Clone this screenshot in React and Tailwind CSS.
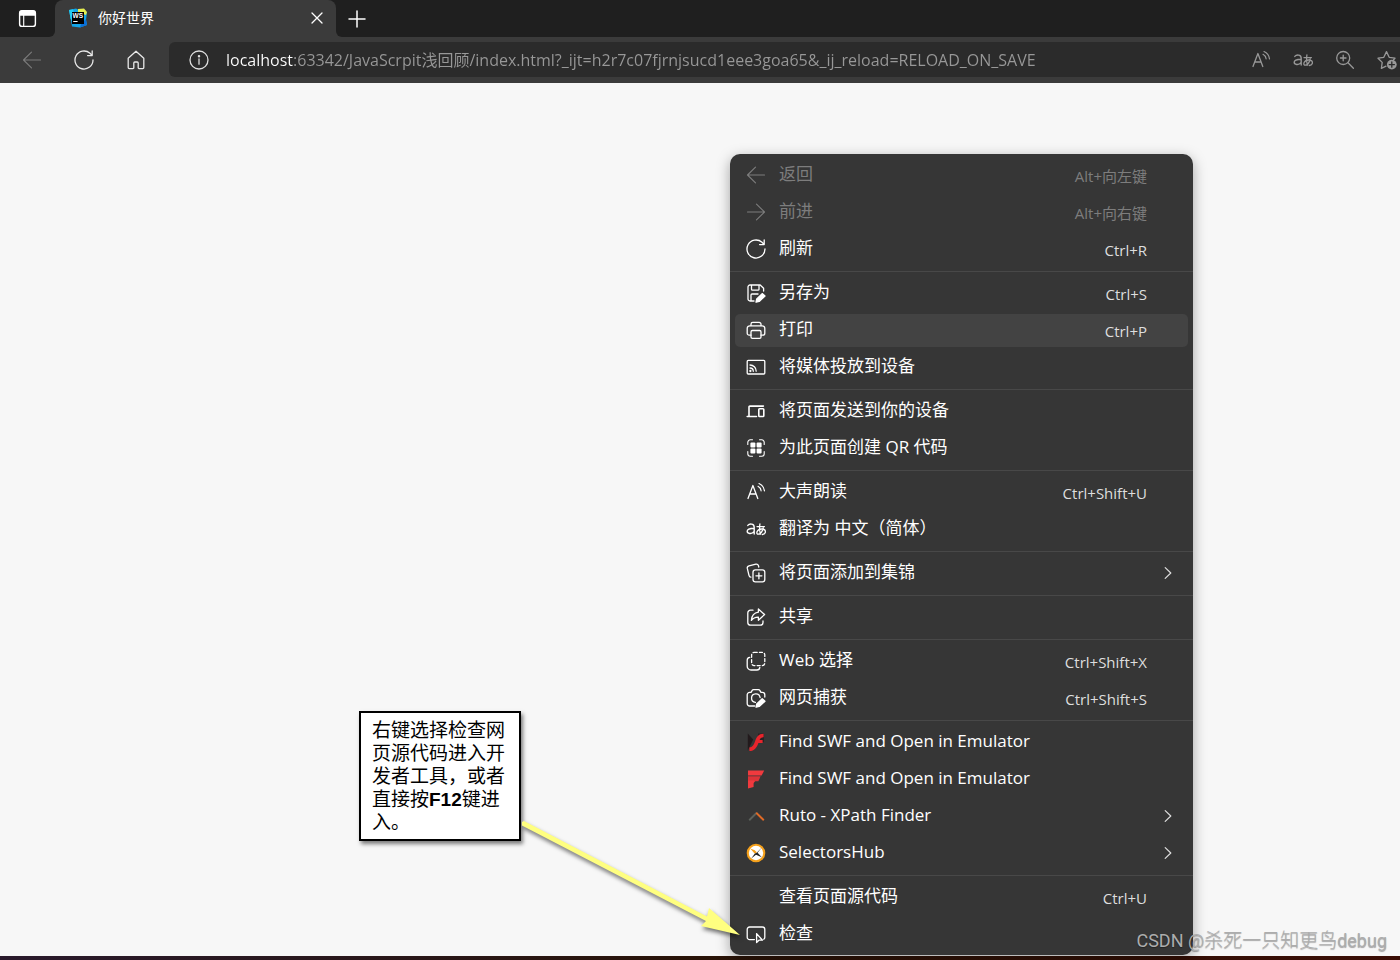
import React from "react";

const LATIN = "font-['Open_Sans','Noto_Sans_CJK_SC',sans-serif]";

function Svg({ children, className = "size-5", viewBox = "0 0 20 20" }) {
  return (
    <svg
      viewBox={viewBox}
      className={`${className} shrink-0`}
      fill="none"
      stroke="currentColor"
      strokeWidth="1.3"
      strokeLinecap="round"
      strokeLinejoin="round"
      aria-hidden="true"
    >
      {children}
    </svg>
  );
}

const icons = {
  back: <path d="M18.5 10H1.5M9.5 2.2L1.5 10l8 7.8" strokeWidth="1.1" />,
  forward: <path d="M1.5 10h17M10.5 2.2l8 7.8-8 7.8" strokeWidth="1.1" />,
  refresh: <path d="M19 10a9 9 0 1 1-3-6.7L18 5.400M18.200 1v4.600h-4.600" />,
  home: <path d="M2.2 8.300L10 1.200l7.800 7.100V17.600a1 1 0 0 1-1 1H13a.8.8 0 0 1-.8-.8V13a1 1 0 0 0-1-1H8.800a1 1 0 0 0-1 1v4.800a.8.8 0 0 1-.8.8H3.200a1 1 0 0 1-1-1z" />,
  info: (
    <>
      <circle cx="10" cy="10" r="9" />
      <path d="M10 9v5.200" />
      <circle cx="10" cy="6.200" r=".6" fill="currentColor" />
    </>
  ),
  save: (
    <>
      <path d="M8 18H4a2 2 0 0 1-2-2V4a2 2 0 0 1 2-2h10.200L17.600 5.200V8M5.500 2.200V6.200a1 1 0 0 0 1 1h5.500a1 1 0 0 0 1-1V2.200M5 18v-6a1 1 0 0 1 1-1h6" />
      <path d="M16.200 10.600l2.800 2.400-5.800 5.400-3.200.8.700-3.200z" fill="currentColor" />
    </>
  ),
  print: (
    <>
      <path d="M5 15.200H3.200A2 2 0 0 1 1.200 13.200V8.400a2.600 2.600 0 0 1 2.600-2.600h12.400a2.600 2.600 0 0 1 2.600 2.600v4.800a2 2 0 0 1-2 2H15" />
      <path d="M5 5.600V4.200A1.800 1.800 0 0 1 6.800 2.400h6.400A1.800 1.800 0 0 1 15 4.200v1.400" />
      <rect x="5" y="10.500" width="10" height="7.800" rx="1.400" />
    </>
  ),
  cast: (
    <>
      <rect x="1.200" y="3.400" width="17.600" height="13.600" rx="1" />
      <path d="M4 8a6.200 6.200 0 0 1 6.200 6.200M4 11a3.300 3.300 0 0 1 3.300 3.300" />
      <circle cx="4.400" cy="14" r=".5" fill="currentColor" />
    </>
  ),
  devices: (
    <>
      <path d="M10.500 15.500H1.200M3 15.300V6a.9.9 0 0 1 .9-.9H17.400" strokeWidth="1.600" />
      <rect x="12.800" y="7.800" width="5" height="7.700" rx=".8" strokeWidth="1.600" />
    </>
  ),
  qr: (
    <>
      <path d="M1.800 6.500V4.300a2.500 2.500 0 0 1 2.500-2.500H6.500M13.500 1.800h2.200a2.500 2.500 0 0 1 2.500 2.500V6.500M18.200 13.500v2.200a2.500 2.500 0 0 1-2.500 2.500H13.500M6.500 18.200H4.300a2.500 2.500 0 0 1-2.500-2.500V13.500" strokeWidth="1.100" />
      <g fill="currentColor" stroke="none">
        <rect x="4.400" y="4.400" width="5" height="5" rx="1" />
        <rect x="10.600" y="4.400" width="5" height="5" rx="1" />
        <rect x="4.400" y="10.600" width="5" height="5" rx="1" />
        <rect x="10.600" y="10.600" width="5" height="5" rx="1" />
      </g>
    </>
  ),
  read: (
    <>
      <path d="M2 16.500L6.900 3.500l4.900 13M3.700 12h6.400" />
      <path d="M12 4.300c1.800.9 2.900 2.400 3.100 4.500M13 1.500c3.100 1.300 5 3.700 5.500 7.300" strokeWidth="1.200" />
    </>
  ),
  translate: (
    <>
      <path d="M1.800 6.400C3.200 4.700 8.200 4 8.200 8.200V15M8.200 9.300C4 9.400 1.200 10 1.200 12.300S5.400 15.900 8.200 12.400" strokeWidth="1.400" />
      <path d="M11 7.600h7.400M13.900 5c-.6 3.700-.4 7 .6 10.200M17.200 9c-.8 3.200-2.600 6.200-4.800 6.200-3 0-1.500-5.200 3.300-5.200 5 0 4.700 5 .6 5.500" strokeWidth="1.300" />
    </>
  ),
  collections: (
    <>
      <rect x="7" y="6.800" width="11.800" height="12" rx="2.400" />
      <path d="M12.900 9.800v6M9.900 12.800h6" />
      <path d="M4.900 14.200C3.700 14 3.200 13.300 3 12.300L1.300 5.400C1 3.900 1.700 3.100 3 2.800L9.900 1.200c1.300-.2 2.200.4 2.600 1.600l.3 1.200" />
    </>
  ),
  share: (
    <>
      <path d="M7 3.200H4.600A2.800 2.800 0 0 0 1.800 6v9.400a2.800 2.800 0 0 0 2.800 2.800h9.600a2.800 2.800 0 0 0 2.800-2.800V14" />
      <path d="M12.400 2l6.200 5.600-6.200 5.600v-3.100c-3.200-.1-5.300.9-7 3.300.3-4.400 2.600-7.600 7-8.200z" />
    </>
  ),
  select: (
    <>
      <path d="M3.800 6.400C2.200 6.600 1.200 7.700 1.200 9.200v6a3.800 3.800 0 0 0 3.800 3.800h6c1.500 0 2.600-1 2.800-2.600" />
      <rect x="5.600" y="1.400" width="13.200" height="13.200" rx="2.600" strokeDasharray="3 2.200" />
    </>
  ),
  capture: (
    <>
      <path d="M8.600 18H3.600a2.400 2.400 0 0 1-2.400-2.400V6.800a2.400 2.400 0 0 1 2.400-2.400H5l1.200-2A1.600 1.600 0 0 1 7.600 1.600h4.800a1.600 1.600 0 0 1 1.400.8l1.200 2h1.400a2.400 2.400 0 0 1 2.400 2.400V9" />
      <path d="M9.400 14.400a4.300 4.300 0 1 1 4.700-4.900" />
      <path d="M16.200 10.800l2.800 2.400-5.800 5.200-3.200.8.700-3.200z" fill="currentColor" />
    </>
  ),
  inspect: (
    <>
      <path d="M8.400 15.600H3.600a2.400 2.400 0 0 1-2.400-2.400V5.400A2.400 2.400 0 0 1 3.600 3h12.800a2.400 2.400 0 0 1 2.400 2.400v7.800c0 .9-.4 1.600-1 2" />
      <path d="M10.600 9.600v8.900l2.300-2.300h3.600z" />
    </>
  ),
  flash: (
    <g stroke="none">
      <path d="M1.800 1.500l5.400 6L1.800 18.500z" fill="#221a1c" />
      <path d="M12 1.500h6v9l-6-3z" fill="#2a2224" />
      <path d="M17.600 1.800v3.400c-2.400 0-3.200.8-4 2.700h3v3h-4.200C10.800 15.600 8.400 18.800 3.400 19v-3.400c3-.4 4.300-2.700 5.600-6.200 1.600-4.400 3.400-7.500 8.600-7.600z" fill="#e8252c" />
    </g>
  ),
  ruffle: (
    <g stroke="none" fill="#f03a3e">
      <path d="M2 1.600h16.200l-2.600 5H2z" />
      <path d="M2 7.200h12.600l-2.200 5H9.200l-.6 1H2z" fill="#dc3338" />
      <path d="M2 11.500h6.600l-1 3v3.600L2 19.400z" />
    </g>
  ),
  ruto: (
    <g strokeWidth="1.900" strokeLinecap="butt">
      <path d="M3.200 14.200L10.700 6.800" stroke="#5c625c" />
      <path d="M10.200 6.800l7.600 7.400" stroke="#e06a26" />
    </g>
  ),
  hub: (
    <g stroke="none">
      <circle cx="10" cy="10" r="9.300" fill="#f5a11c" />
      <circle cx="10" cy="10" r="7.200" fill="#fff" />
      <path d="M4.200 5.500l4.600 1.700L11 9.400 8.600 10.600z" fill="#f5a11c" />
      <path d="M16.200 4L11.600 9.800l4.200 4.400-5.800-2.400-4.800 3.600 3.700-4.800 1.900-.9z" fill="#222" />
    </g>
  ),
  zoom: (
    <>
      <circle cx="8.200" cy="8" r="6.500" />
      <path d="M13 12.800l5.400 5.400M8.200 5.200v5.600M5.400 8h5.600" />
    </>
  ),
  star: (
    <>
      <path d="M9 16.200l-4.600 2.200.8-6L1 8.200l5.800-.9L9.500 1.600l2.700 5.700 5.800.9-1.400 1.500" />
      <circle cx="14.800" cy="14.600" r="4.900" fill="currentColor" stroke="none" />
      <path d="M14.800 12v5.200M12.200 14.600h5.200" stroke="#2b2b2b" />
    </>
  ),
  workspace: (
    <>
      <rect x="1.700" y="1.900" width="16.600" height="16.400" rx="2.600" strokeWidth="1.500" />
      <path d="M6 6v12" strokeWidth="1.200" />
      <path d="M2 4.300a2.400 2.400 0 0 1 2.400-2.400h11.200A2.400 2.400 0 0 1 18 4.300V6.400H2z" fill="currentColor" />
    </>
  ),
  close: <path d="M5 5l10 10M15 5L5 15" strokeWidth="1.300" />,
  plus: <path d="M10 2v16M2 10h16" strokeWidth="1.500" />,
  chevron: <path d="M7.200 4.600l5.600 5.400-5.600 5.400" strokeWidth="1.200" />,
};

const groups = [
  [
    { icon: "back", label: "返回", keys: "Alt+向左键", disabled: true },
    { icon: "forward", label: "前进", keys: "Alt+向右键", disabled: true },
    { icon: "refresh", label: "刷新", keys: "Ctrl+R" },
  ],
  [
    { icon: "save", label: "另存为", keys: "Ctrl+S" },
    { icon: "print", label: "打印", keys: "Ctrl+P", active: true },
    { icon: "cast", label: "将媒体投放到设备" },
  ],
  [
    { icon: "devices", label: "将页面发送到你的设备" },
    { icon: "qr", label: "为此页面创建 QR 代码" },
  ],
  [
    { icon: "read", label: "大声朗读", keys: "Ctrl+Shift+U" },
    { icon: "translate", label: "翻译为 中文（简体）" },
  ],
  [{ icon: "collections", label: "将页面添加到集锦", submenu: true }],
  [{ icon: "share", label: "共享" }],
  [
    { icon: "select", label: "Web 选择", keys: "Ctrl+Shift+X" },
    { icon: "capture", label: "网页捕获", keys: "Ctrl+Shift+S" },
  ],
  [
    { icon: "flash", label: "Find SWF and Open in Emulator" },
    { icon: "ruffle", label: "Find SWF and Open in Emulator" },
    { icon: "ruto", label: "Ruto - XPath Finder", submenu: true },
    { icon: "hub", label: "SelectorsHub", submenu: true },
  ],
  [
    { label: "查看页面源代码", keys: "Ctrl+U" },
    { icon: "inspect", label: "检查" },
  ],
];

function MenuItem({ item }) {
  const tone = item.disabled ? "text-[#7d7d7d]" : "text-white";
  return (
    <li role="none" className="px-[5px] py-0.5">
      <button
        type="button"
        role="menuitem"
        disabled={item.disabled}
        className={`flex h-[33px] w-full items-center rounded-[5px] pb-0.5 pl-[11px] text-left ${tone} ${item.active ? "bg-[#434343]" : ""}`}
      >
        <Svg>{item.icon ? icons[item.icon] : null}</Svg>
        <span className="ml-[13px] flex-1 pb-0.5 text-[17px] leading-6 whitespace-nowrap">{item.label}</span>
        {item.keys && (
          <kbd className={`${LATIN} pt-0.5 pr-[41px] text-[15px] leading-5 ${item.disabled ? "" : "text-[#dedede]"}`}>{item.keys}</kbd>
        )}
        {item.submenu && (
          <span className="pr-[10px] text-[#dedede]">
            <Svg>{icons.chevron}</Svg>
          </span>
        )}
      </button>
    </li>
  );
}

function ContextMenu() {
  return (
    <ul
      role="menu"
      className="absolute top-[71px] left-[730px] w-[463px] rounded-[10px] bg-[#363636] pt-[3px] pb-0.5 shadow-[0_4px_14px_rgba(0,0,0,0.35)]"
    >
      {groups.map((group, g) => (
        <React.Fragment key={g}>
          {g > 0 && <li role="separator" className="my-[3px] h-px bg-[#484848]" />}
          {group.map((item, i) => (
            <MenuItem key={i} item={item} />
          ))}
        </React.Fragment>
      ))}
    </ul>
  );
}

function WebStormLogo() {
  return (
    <svg viewBox="0 0 20 20" className="size-5 shrink-0" aria-hidden="true">
      <path d="M1 2l7-1.500L13 3l6 1-1 8 1 5-7 2.500L4 18.500 2.500 10z" fill="#12a5e8" />
      <path d="M1 2l4-.8 1 5-1 9-2.500-5z" fill="#22cdf2" />
      <path d="M10 1l6-.5L19 4l-1 3-8-3z" fill="#e6ee50" />
      <path d="M13 16l5-5 1 6-7 2.500z" fill="#0a6fd8" />
      <rect x="4" y="4" width="12" height="12" fill="#000" />
      <text x="4.600" y="10" fill="#fff" fontSize="6.500" fontWeight="700" fontFamily="Liberation Sans, sans-serif">WS</text>
      <rect x="5.200" y="13" width="4.400" height="1" fill="#fff" />
    </svg>
  );
}

function TabStrip() {
  return (
    <div className="flex h-[38px] bg-[#3b3b3b] text-white">
      <button type="button" aria-label="标签页操作菜单" className="flex h-[37px] w-[55px] items-center justify-center rounded-br-md bg-[#1f1f1f]">
        <Svg className="size-[19px]">{icons.workspace}</Svg>
      </button>
      <div className="flex w-[281px] bg-[#1f1f1f]">
        <div role="tab" aria-selected="true" className="flex flex-1 items-center rounded-t-lg bg-[#3b3b3b] pr-[9px] pb-0.5 pl-[13px]">
          <WebStormLogo />
          <span className="ml-[10px] flex-1 text-sm leading-5">你好世界</span>
          <button type="button" aria-label="关闭标签页" className="flex items-center">
            <Svg>{icons.close}</Svg>
          </button>
        </div>
      </div>
      <div className="flex h-[37px] flex-1 rounded-bl-md bg-[#1f1f1f]">
        <button type="button" aria-label="新建标签页" className="flex w-[41px] items-center justify-center">
          <Svg>{icons.plus}</Svg>
        </button>
      </div>
    </div>
  );
}

function ToolButton({ icon, label, className }) {
  return (
    <button type="button" aria-label={label} className={`flex h-[35px] shrink-0 items-center justify-center ${className}`}>
      <Svg>{icons[icon]}</Svg>
    </button>
  );
}

function Toolbar() {
  return (
    <div className="flex h-[45px] items-center bg-[#3b3b3b] pb-0.5 pl-[14px]">
      <nav className="mr-[15px] flex gap-4">
        <ToolButton icon="back" label="返回" className="w-9 text-[#7b7b7b]" />
        <ToolButton icon="refresh" label="刷新" className="w-9 text-[#e8e8e8]" />
        <ToolButton icon="home" label="主页" className="w-9 text-[#e8e8e8]" />
      </nav>
      <div className="flex h-[35px] min-w-0 flex-1 items-center rounded-l-md bg-[#2b2b2b]">
        <ToolButton icon="info" label="查看站点信息" className="ml-5 w-5 text-[#dedede]" />
        <input
          type="text"
          aria-label="地址栏"
          spellCheck="false"
          defaultValue="localhost:63342/JavaScrpit浅回顾/index.html?_ijt=h2r7c07fjrnjsucd1eee3goa65&_ij_reload=RELOAD_ON_SAVE"
          className={`${LATIN} ml-[17px] h-[35px] min-w-0 flex-1 bg-[linear-gradient(90deg,#ffffff_68px,#989898_68px)] bg-clip-text pb-0.5 text-base text-transparent outline-none`}
        />
        <div className="flex gap-4 text-[#989898]">
          <ToolButton icon="read" label="大声朗读" className="w-[26px]" />
          <ToolButton icon="translate" label="翻译" className="w-[26px]" />
          <ToolButton icon="zoom" label="缩放" className="w-[26px]" />
          <ToolButton icon="star" label="添加到收藏夹" className="w-[26px]" />
        </div>
      </div>
    </div>
  );
}

function Annotation() {
  return (
    <>
      <p className="absolute top-[628px] left-[359px] w-[162px] border-2 border-black bg-white pt-[6px] pr-[6px] pb-[5px] pl-[11px] font-['Liberation_Sans','Noto_Sans_CJK_SC',sans-serif] text-[19px] leading-[23px] text-black shadow-[2px_3px_4px_rgba(0,0,0,0.5)]">
        右键选择检查网页源代码进入开发者工具，或者直接按<b className="inline-block leading-5">F12</b>键进入。
      </p>
      <svg viewBox="0 0 230 130" className="absolute top-[732px] left-[520px] h-[130px] w-[230px] drop-shadow-[1px_3px_2px_rgba(0,0,0,0.55)]" aria-hidden="true">
        <path d="M2 7l2-1L187 101.500l2-8.500 31 27-39-9 5-5L2 10.500z" fill="#ffff80" />
      </svg>
    </>
  );
}

export default function App() {
  return (
    <div className={`flex min-h-screen flex-col overflow-x-hidden bg-[#f7f7f7] ${LATIN}`}>
      <header>
        <TabStrip />
        <Toolbar />
      </header>
      <main className="relative flex-1">
        <ContextMenu />
        <Annotation />
        <p className="absolute right-[13px] bottom-[3px] font-['Roboto','Noto_Sans_CJK_SC',sans-serif] text-lg leading-6 whitespace-nowrap text-[#adadad] [text-shadow:0_1px_1px_rgba(0,0,0,0.35)]">
          CSDN @<span className="text-[19px] font-light">杀死一只知更鸟</span>debug
        </p>
      </main>
      <footer className="h-1 bg-linear-to-r from-[#2a1a2c] via-[#2a1408] to-[#3a0d05]" />
    </div>
  );
}
